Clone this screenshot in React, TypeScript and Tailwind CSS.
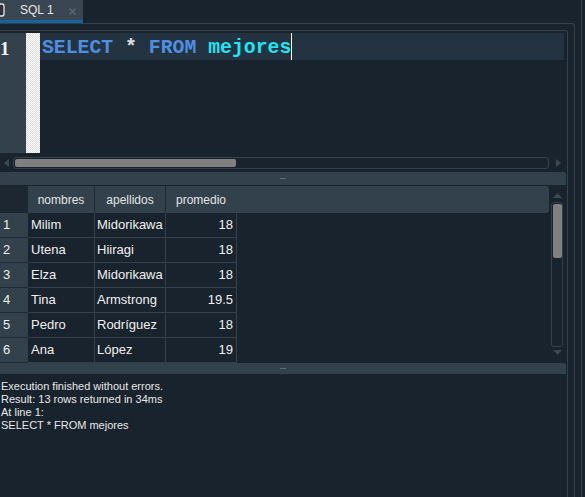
const rows = [
  { n: "1", nombre: "Milim", apellido: "Midorikawa", promedio: "18" },
  { n: "2", nombre: "Utena", apellido: "Hiiragi", promedio: "18" },
  { n: "3", nombre: "Elza", apellido: "Midorikawa", promedio: "18" },
  { n: "4", nombre: "Tina", apellido: "Armstrong", promedio: "19.5" },
  { n: "5", nombre: "Pedro", apellido: "Rodríguez", promedio: "18" },
  { n: "6", nombre: "Ana", apellido: "López", promedio: "19" },
];

function Splitter({ h }: { h: string }) {
  return (
    <div className={`${h} w-[566px] bg-[#32414b] rounded-tr-[2px] flex items-center justify-center`}>
      <div className="w-[6px] h-px bg-[#5b6a75]" />
    </div>
  );
}

export default function App() {
  return (
    <div className="w-[585px] h-[497px] bg-[#19232d] overflow-hidden flex font-['Liberation_Sans',Arial,sans-serif] text-[#f0f0f0]">
      <div className="w-[581px] flex flex-col">
        {/* tab bar */}
        <div className="h-[23px] flex shrink-0">
          <div className="w-[83px] h-full bg-[#3a4651] border-b-[3px] border-[#1464a0] flex items-center">
            <svg width="12" height="14" viewBox="0 0 12 14" className="-ml-[7px] shrink-0">
              <rect x="1" y="1" width="10" height="12" rx="2" fill="#2a333c" stroke="#e8e8e8" strokeWidth="1.3" />
            </svg>
            <span className="ml-[15px] text-[12px] leading-none text-[#e6e8ea]">SQL 1</span>
            <svg width="7" height="7" viewBox="0 0 7 7" className="ml-[15px] mt-[2px]">
              <path d="M0.5 0.5 L6.5 6.5 M6.5 0.5 L0.5 6.5" stroke="#5d6a74" strokeWidth="1.2" />
            </svg>
          </div>
        </div>

        {/* outer frame */}
        <div className="flex-1 w-[575px] border-t border-r border-[#32414b] rounded-tr-[3px] pt-[6px] flex flex-col">
          {/* inner frame */}
          <div className="flex-1 w-[568px] border-t border-r border-[#32414b] rounded-tr-[3px] flex flex-col">
            {/* editor */}
            <div className="h-[141px] w-[564px] pt-[2px] flex flex-col shrink-0">
              <div className="h-[120px] flex">
                <div className="w-[26px] bg-[#32414b]">
                  <div className="h-[27px] flex items-center pt-[5px] font-['Liberation_Serif',serif] font-bold text-[19px] text-[#f2f2f2]">
                    1
                  </div>
                </div>
                <div className="w-[14px] bg-[#f4f4f4] bg-[repeating-conic-gradient(#ffffff_0%_25%,#dcdcdc_0%_50%)] bg-[length:2px_2px]" />
                <div className="flex-1">
                  <div className="h-[27px] bg-[#243342] flex items-center pl-[2px] font-['Liberation_Mono',monospace] font-bold text-[19.8px] whitespace-pre">
                    <div className="flex items-center pt-[5px]">
                      <span className="text-[#4f8fe0]">SELECT</span>
                      <span className="text-[#e0e0e0]"> * </span>
                      <span className="text-[#4f8fe0]">FROM</span>
                      <span className="text-[#1ee6f4]"> mejores</span>
                    </div>
                    <div className="w-px h-[27px] bg-white" />
                  </div>
                </div>
              </div>
              {/* horizontal scrollbar */}
              <div className="mt-[4px] h-[12px] flex items-center">
                <svg width="5" height="8" viewBox="0 0 5 8" className="ml-[4px]">
                  <path d="M5 0 L0 4 L5 8 Z" fill="#3a4956" />
                </svg>
                <div className="ml-[4px] w-[536px] h-[12px] border border-[#32414b] rounded-[3px] flex items-center pl-px">
                  <div className="w-[221px] h-[8px] bg-[#808080] rounded-[2px]" />
                </div>
                <svg width="5" height="8" viewBox="0 0 5 8" className="ml-[7px]">
                  <path d="M0 0 L5 4 L0 8 Z" fill="#3a4956" />
                </svg>
              </div>
            </div>

            <Splitter h="h-[13px] shrink-0" />

            {/* results table */}
            <div className="h-[178px] pt-px flex shrink-0">
              <div className="w-[549px] flex flex-col">
                <div className="h-[27px] flex text-[12px] text-[#e2e4e6]">
                  <div className="w-[28px] bg-[#1c2731]" />
                  <div className="flex-1 bg-[#32414b] rounded-r-[3px] flex">
                    <div className="w-[67px] border-r border-[#1f2a34] flex items-center justify-center">nombres</div>
                    <div className="w-[71px] border-r border-[#1f2a34] flex items-center justify-center">apellidos</div>
                    <div className="w-[70px] flex items-center justify-center">promedio</div>
                  </div>
                </div>
                {rows.map((r) => (
                  <div key={r.n} className="h-[25px] flex text-[13px]">
                    <div className="w-[28px] bg-[#32414b] border-b border-[#1f2a34] flex items-center pl-[3px]">{r.n}</div>
                    <div className="w-[67px] border-r border-b border-[#32414b] flex items-center pl-[3px]">{r.nombre}</div>
                    <div className="w-[71px] border-r border-b border-[#32414b] flex items-center pl-[2px]">{r.apellido}</div>
                    <div className="w-[71px] border-r border-b border-[#32414b] flex items-center justify-end pr-[3px]">{r.promedio}</div>
                  </div>
                ))}
              </div>
              {/* vertical scrollbar */}
              <div className="ml-[2px] w-[12px] flex flex-col items-center pt-[7px]">
                <svg width="9" height="5" viewBox="0 0 9 5">
                  <path d="M0 5 L4.5 0 L9 5 Z" fill="#3a4956" />
                </svg>
                <div className="mt-[4px] w-[12px] h-[145px] border border-[#32414b] rounded-[3px] flex flex-col items-center pt-px">
                  <div className="w-[9px] h-[54px] bg-[#808080] rounded-[2px]" />
                </div>
                <svg width="9" height="5" viewBox="0 0 9 5" className="mt-[3px]">
                  <path d="M0 0 L4.5 5 L9 0 Z" fill="#3a4956" />
                </svg>
              </div>
            </div>

            <Splitter h="h-[11px] shrink-0" />

            {/* log */}
            <div className="flex-1 pt-[6px] pl-px text-[11px] leading-[13px] text-[#e8e8e8]">
              <div>Execution finished without errors.</div>
              <div>Result: 13 rows returned in 34ms</div>
              <div>At line 1:</div>
              <div>SELECT * FROM mejores</div>
            </div>
          </div>
        </div>
      </div>
      <div className="w-px bg-[#32414b]" />
    </div>
  );
}
